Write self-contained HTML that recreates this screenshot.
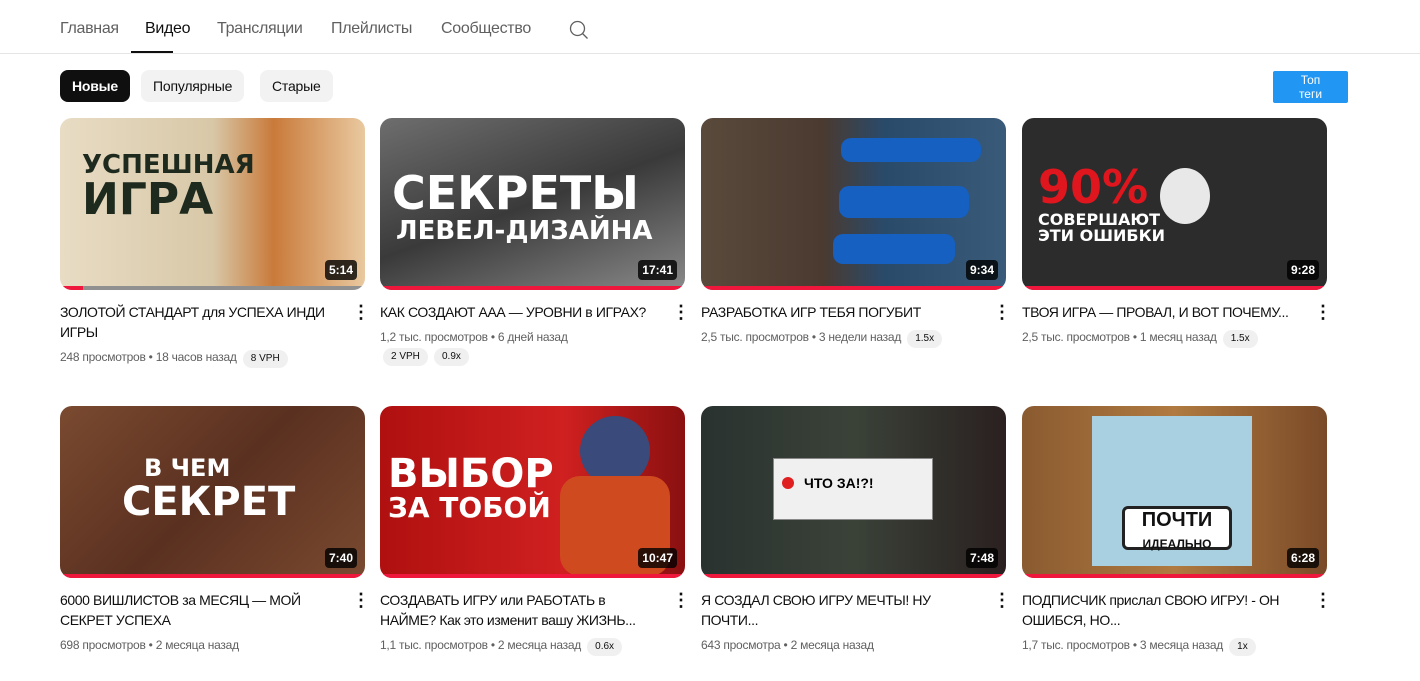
<!DOCTYPE html>
<html><head><meta charset="utf-8"><style>
*{box-sizing:border-box;margin:0;padding:0}
body{width:1420px;height:681px;background:#fff;font-family:"Liberation Sans",sans-serif;position:relative;overflow:hidden;color:#0f0f0f}
.tabs{position:absolute;top:0;left:0;right:0;height:54px;border-bottom:1px solid #e5e5e5}
.tab{position:absolute;top:20px;font-size:16px;color:#606060;font-weight:500;letter-spacing:-0.3px}
.tab.a{color:#0f0f0f}
.ul{position:absolute;left:131px;top:51px;width:42px;height:2px;background:#0f0f0f}
.chip{position:absolute;top:70px;height:32px;border-radius:8px;background:#f2f2f2;font-size:14px;line-height:32px;padding:0 12px;color:#0f0f0f;letter-spacing:-0.2px}
.chip.a{background:#0f0f0f;color:#fff;font-weight:bold}
.top{position:absolute;left:1273px;top:71px;width:75px;height:32px;background:#2196f3;color:#fff;font-size:12px;text-align:center;line-height:14px;padding-top:2px;border-radius:2px}
.card{position:absolute;width:305px}
.th{position:relative;height:172px;border-radius:12px;overflow:hidden}
.th .bar{position:absolute;left:0;right:0;bottom:0;height:4px;background:#f0173c}
.dur{position:absolute;right:8px;bottom:10px;background:rgba(0,0,0,.8);color:#fff;font-size:12px;font-weight:bold;padding:3px 4px;border-radius:4px}
.big{position:absolute;color:#fff;font-weight:900;font-family:"DejaVu Sans",sans-serif;line-height:1}
.t{margin-top:12px;font-size:14px;line-height:20px;padding-right:28px;position:relative;letter-spacing:-0.4px;width:305px}
.t .m{position:absolute;left:292px;top:2px;font-size:18px;font-weight:bold;line-height:16px;width:6px;text-align:center;letter-spacing:0}
.meta{font-size:12px;color:#606060;margin-top:6px;line-height:18px;letter-spacing:-0.25px}
.bd{display:inline-block;background:#f0f0f0;border-radius:9px;font-size:10px;color:#0f0f0f;padding:2px 8px;margin-left:3px;line-height:14px;letter-spacing:0}
</style></head><body>
<div class="tabs">
<span class="tab" style="left:60px">Главная</span>
<span class="tab a" style="left:145px">Видео</span>
<span class="tab" style="left:217px">Трансляции</span>
<span class="tab" style="left:331px">Плейлисты</span>
<span class="tab" style="left:441px">Сообщество</span>
<svg style="position:absolute;left:569px;top:20px" width="20" height="20" viewBox="0 0 20 20"><circle cx="8.5" cy="8.5" r="7" fill="none" stroke="#606060" stroke-width="1.3"/><path d="M13.5 13.5L18.5 18.5" stroke="#606060" stroke-width="1.3"/></svg>
<div class="ul"></div>
</div>
<div class="chip a" style="left:60px">Новые</div>
<div class="chip" style="left:141px">Популярные</div>
<div class="chip" style="left:260px">Старые</div>
<div class="top">Топ<br>теги</div>

<div class="card" style="left:60px;top:118px"><div class="th" style="background:linear-gradient(90deg,#e8dcc4 0%,#d8c8a8 50%,#c97a3a 70%,#e9c9a0 100%)"><div class="big" style="left:22px;top:34px;color:#1e2a1e;font-size:26px">УСПЕШНАЯ</div><div class="big" style="left:22px;top:60px;color:#1e2a1e;font-size:44px">ИГРА</div><div class="bar" style="background:#909090"></div><div class="bar" style="right:auto;width:23px"></div><span class="dur">5:14</span></div>
<div class="t">ЗОЛОТОЙ СТАНДАРТ для УСПЕХА ИНДИ ИГРЫ<span class="m">⋮</span></div>
<div class="meta">248 просмотров • 18 часов назад <span class="bd">8 VPH</span></div></div>

<div class="card" style="left:380px;top:118px"><div class="th" style="background:linear-gradient(160deg,#6e6e6e,#3a3a3a 50%,#8a8a8a)"><div class="big" style="left:12px;top:52px;font-size:46px">СЕКРЕТЫ</div><div class="big" style="left:16px;top:100px;font-size:26px">ЛЕВЕЛ-ДИЗАЙНА</div><div class="bar"></div><span class="dur">17:41</span></div>
<div class="t">КАК СОЗДАЮТ ААА — УРОВНИ в ИГРАХ?<span class="m">⋮</span></div>
<div class="meta">1,2 тыс. просмотров • 6 дней назад<br><span class="bd" style="margin-left:3px">2 VPH</span> <span class="bd">0.9x</span></div></div>

<div class="card" style="left:701px;top:118px"><div class="th" style="background:linear-gradient(90deg,#5a4a3c,#4a3a30 40%,#2a4a6a 60%,#3a5a7a)"><div style="position:absolute;left:140px;top:20px;width:140px;height:24px;background:#1560c0;border-radius:10px"></div><div style="position:absolute;left:138px;top:68px;width:130px;height:32px;background:#1560c0;border-radius:10px"></div><div style="position:absolute;left:132px;top:116px;width:122px;height:30px;background:#1560c0;border-radius:10px"></div><div class="bar"></div><span class="dur">9:34</span></div>
<div class="t">РАЗРАБОТКА ИГР ТЕБЯ ПОГУБИТ<span class="m">⋮</span></div>
<div class="meta">2,5 тыс. просмотров • 3 недели назад <span class="bd">1.5x</span></div></div>

<div class="card" style="left:1022px;top:118px"><div class="th" style="background:#2c2c2c"><div class="big" style="left:16px;top:46px;font-size:46px;color:#e0161e">90%</div><div class="big" style="left:16px;top:94px;font-size:16px">СОВЕРШАЮТ<br>ЭТИ ОШИБКИ</div><div style="position:absolute;left:138px;top:50px;width:50px;height:56px;background:#e8e8e8;border-radius:50%"></div><div class="bar"></div><span class="dur">9:28</span></div>
<div class="t" style="white-space:nowrap">ТВОЯ ИГРА — ПРОВАЛ, И ВОТ ПОЧЕМУ...<span class="m">⋮</span></div>
<div class="meta">2,5 тыс. просмотров • 1 месяц назад <span class="bd">1.5x</span></div></div>

<div class="card" style="left:60px;top:406px"><div class="th" style="background:linear-gradient(135deg,#7a4a30,#5a3020 50%,#7a4a30)"><div class="big" style="left:84px;top:50px;font-size:24px">В ЧЕМ</div><div class="big" style="left:62px;top:76px;font-size:40px">СЕКРЕТ</div><div class="bar"></div><span class="dur">7:40</span></div>
<div class="t">6000 ВИШЛИСТОВ за МЕСЯЦ — МОЙ СЕКРЕТ УСПЕХА<span class="m">⋮</span></div>
<div class="meta">698 просмотров • 2 месяца назад</div></div>

<div class="card" style="left:380px;top:406px"><div class="th" style="background:linear-gradient(90deg,#b01010,#d02020 60%,#8a1010)"><div class="big" style="left:8px;top:48px;font-size:40px">ВЫБОР</div><div class="big" style="left:8px;top:88px;font-size:28px">ЗА ТОБОЙ</div><div style="position:absolute;left:200px;top:10px;width:70px;height:70px;background:#3a4a7a;border-radius:50%"></div><div style="position:absolute;left:180px;top:70px;width:110px;height:100px;background:#d04a20;border-radius:20px"></div><div class="bar"></div><span class="dur">10:47</span></div>
<div class="t">СОЗДАВАТЬ ИГРУ или РАБОТАТЬ в НАЙМЕ? Как это изменит вашу ЖИЗНЬ...<span class="m">⋮</span></div>
<div class="meta">1,1 тыс. просмотров • 2 месяца назад <span class="bd">0.6x</span></div></div>

<div class="card" style="left:701px;top:406px"><div class="th" style="background:linear-gradient(90deg,#2a3230,#3a4238 50%,#2a2020)"><div style="position:absolute;left:72px;top:52px;width:160px;height:62px;background:#f0f0f0;border:1px solid #888"><div style="font-weight:bold;font-size:14px;margin:16px 0 0 30px;color:#000">ЧТО ЗА!?!</div><div style="position:absolute;left:8px;top:18px;width:12px;height:12px;border-radius:50%;background:#e02020"></div></div><div class="bar"></div><span class="dur">7:48</span></div>
<div class="t">Я СОЗДАЛ СВОЮ ИГРУ МЕЧТЫ! НУ ПОЧТИ...<span class="m">⋮</span></div>
<div class="meta">643 просмотра • 2 месяца назад</div></div>

<div class="card" style="left:1022px;top:406px"><div class="th" style="background:linear-gradient(90deg,#8a5a30,#b07a40 50%,#7a4a28)"><div style="position:absolute;left:70px;top:10px;width:160px;height:150px;background:#a8d0e0"></div><div style="position:absolute;left:100px;top:100px;width:110px;height:44px;background:#fff;border:3px solid #222;border-radius:6px;font-weight:900;font-size:20px;text-align:center;line-height:22px;color:#111">ПОЧТИ<br><span style="font-size:12px">ИДЕАЛЬНО</span></div><div class="bar"></div><span class="dur">6:28</span></div>
<div class="t">ПОДПИСЧИК прислал СВОЮ ИГРУ! - ОН ОШИБСЯ, НО...<span class="m">⋮</span></div>
<div class="meta">1,7 тыс. просмотров • 3 месяца назад <span class="bd">1x</span></div></div>
</body></html>
